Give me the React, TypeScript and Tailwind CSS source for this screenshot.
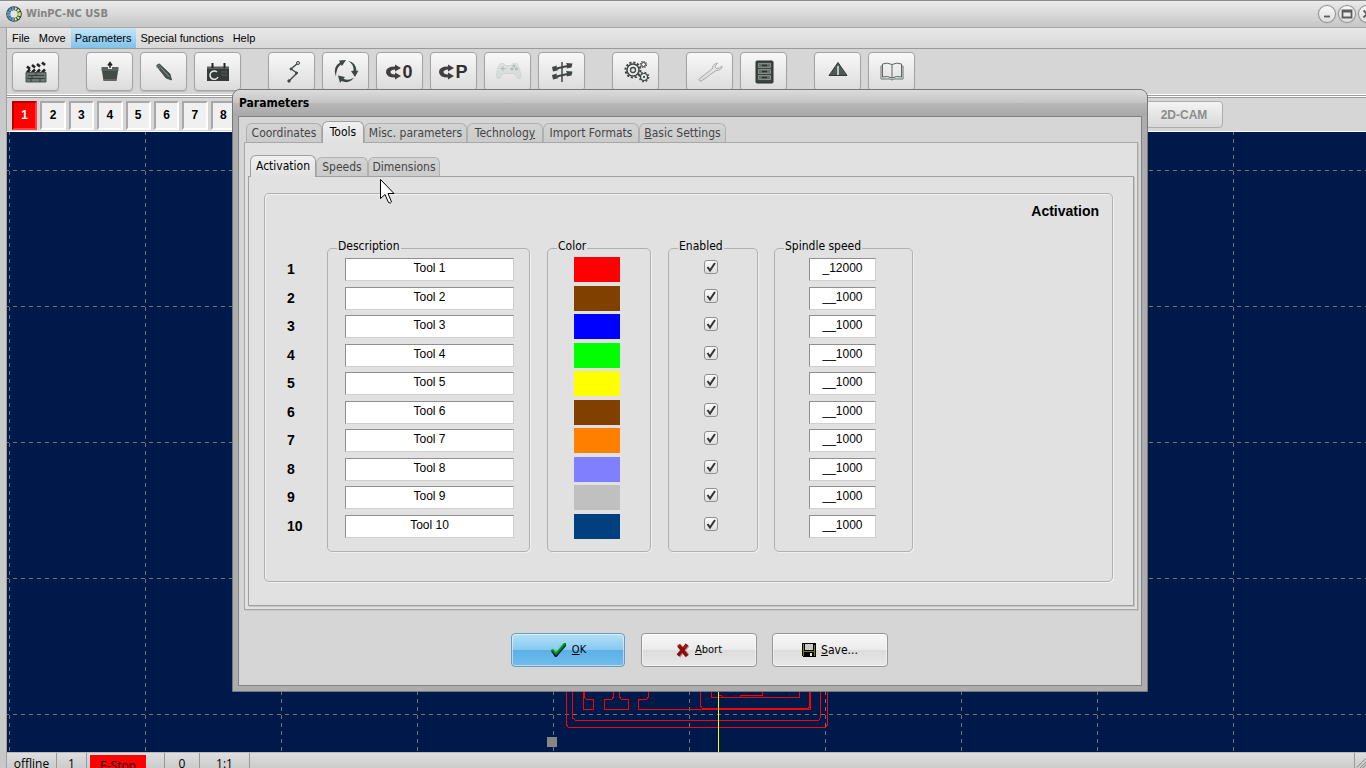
import type { ReactNode } from 'react'
import clsx from 'clsx'

const menuItems = ['File', 'Move', 'Parameters', 'Special functions', 'Help']

const tools = [
  { id: 1, color: '#ff0000', speed: '_12000' },
  { id: 2, color: '#804000', speed: '__1000' },
  { id: 3, color: '#0000ff', speed: '__1000' },
  { id: 4, color: '#00ff00', speed: '__1000' },
  { id: 5, color: '#ffff00', speed: '__1000' },
  { id: 6, color: '#804000', speed: '__1000' },
  { id: 7, color: '#ff8000', speed: '__1000' },
  { id: 8, color: '#8080ff', speed: '__1000' },
  { id: 9, color: '#c0c0c0', speed: '__1000' },
  { id: 10, color: '#004080', speed: '__1000' },
]

const gridColumns = Array.from({ length: 20 }, (_, i) => 2 + i * 136)
const gridRows = Array.from({ length: 12 }, (_, i) => 38 + i * 136)

function Icon({ children, faded }: { children: ReactNode; faded?: boolean }) {
  return (
    <svg
      width="28"
      height="28"
      viewBox="0 0 28 28"
      fill="none"
      stroke="#3f4643"
      className={clsx('shrink-0', faded && 'opacity-40')}
      aria-hidden="true"
    >
      {children}
    </svg>
  )
}

const ClapperIcon = (
  <Icon>
    <path d="M4 8.500 24 3.500v3L4 11.500z" fill="#e8eae9" stroke="none" />
    <path d="m5 8.500 3 2.500M10 7l3 2.500M15 6l3 2.500M20 4.500l3 2.500" stroke="#1f2422" strokeWidth="2.500" />
    <path d="M4 11.500h20v3H4z" fill="#e8eae9" stroke="none" />
    <path d="m5 14.500 3-3M10 14.500l3-3M15 14.500l3-3M20 14.500l3-3" stroke="#1f2422" strokeWidth="2.500" />
    <path d="M4 14.500h20V24H4z" fill="#6d7773" stroke="#4a524e" />
    <path d="M6 17.500h16M5 20.500h18M14 15v2.500M10 17.500v3M18 20.500V24M9 20.500V24" stroke="#363d3a" />
  </Icon>
)

const WorkpieceIcon = (
  <Icon>
    <path d="M5.500 9H12v2h4V9h6.500v4h-17z" fill="#59615e" stroke="none" />
    <path d="M6 13h16l-1.500 10h-13z" fill="#434b47" stroke="none" />
    <path d="M8 22h12" stroke="#7e8783" />
    <path d="M14 10V5M12 7.500 14 4.500l2 3" stroke="#1f2422" strokeWidth="1.500" />
  </Icon>
)

const PencilIcon = (
  <Icon>
    <path d="M6.500 8q1-2 3-2L20 16l1.500 6-5.500-2z" fill="#4b534f" stroke="#2c3330" strokeWidth=".7" />
    <path d="m9.500 7-2.500 2.500M11 8.500 8.500 11M11 10l8 8.500" stroke="#8e9792" />
  </Icon>
)

const CameraIcon = (
  <Icon>
    <path d="M3 8.500h22v3H3z" fill="#5a625e" stroke="none" />
    <path d="M3 11h22v12H3z" fill="#343b38" stroke="none" />
    <path d="M8.500 5v5M20.500 5v5" stroke="#1f2422" strokeWidth="2" />
    <path d="M13 14a4.200 4.200 0 1 0 1 5" stroke="#e4e7e5" strokeWidth="1.500" />
    <path d="M17 14h6M17 17h6" stroke="#59615d" />
  </Icon>
)

const PathIcon = (
  <Icon>
    <path d="M20 5 13 11l6 4-8 8" strokeWidth="1.300" />
    <circle cx="20" cy="5" r="1.500" fill="#ddd" />
    <circle cx="13" cy="11" r="1" fill="#3f4643" />
    <circle cx="18.500" cy="15" r="1" fill="#3f4643" />
    <circle cx="11" cy="23" r="1.200" fill="#3f4643" />
  </Icon>
)

const CycleIcon = (
  <Icon>
    <path d="M4 19Q0 9 8 4.500L7 2.500l7-.5-4 6-1-1.500Q4 10 4 19z" fill="#3f4643" stroke="none" />
    <path d="M16 3q8 1 8.500 10l2-.5-3.500 6.500-4-6 2.500-.2Q22 6 16 3z" fill="#3f4643" stroke="none" />
    <path d="M22 19.500q-5 7-12.500 3.500L8 25l-2-7.500 7 1.500-1.500 1.800q5 2.500 10.500-1.300z" fill="#3f4643" stroke="none" />
  </Icon>
)

// double return arrow in front of the 0 and P symbols
function ReturnIcon({ letter }: { letter: string }) {
  return (
    <span className="flex items-center text-[18px] leading-5 font-bold text-[#332f2f]">
      <svg width="16" height="16" viewBox="0 0 16 16" aria-hidden="true">
        <path d="M9 0.500 15 4 9 7.500V5.500Q4.500 6 4.500 8T9 10.500V8.500l6 3.500-6 3.500v-2Q0 13.500 0 8T9 2.500z" fill="#443f3f" />
      </svg>
      {letter}
    </span>
  )
}

const GamepadIcon = (
  <Icon faded>
    <path
      d="M6 5.500h4l2 2h5l2-2h4q3 4 4 13-.5 2.500-3 2-2-3-4.500-5h-10q-2 2-4 5-2.500.5-3-2Q3 9.500 6 5.500z"
      fill="#c3cec8"
      stroke="#9db3a8"
      strokeWidth=".8"
    />
    <path d="M6.500 10.500h5M9 8v5" stroke="#5e6f66" />
    <circle cx="20" cy="8" r="1" />
    <circle cx="22.500" cy="11" r="1" />
    <circle cx="18" cy="11" r="1" />
  </Icon>
)

const AxesIcon = (
  <Icon>
    <path d="M14 4v20" strokeWidth="1.500" />
    <path d="M6 11 22 7.500M6 19 22 15.500" strokeWidth="2" />
    <path d="m4 9 5-1.500-1 3 3 1.500-6 1.500zM18 5l6.500.5-1 4-5 1 1-2.500zM4 17l5-1.500-1 3 3 1.500-6 1.500zM18 13l6.500.5-1 4-5 1 1-2.500z" fill="#3f4643" stroke="none" />
  </Icon>
)

const GearsIcon = (
  <Icon>
    <circle cx="11" cy="12" r="6" strokeWidth="1.500" />
    <circle cx="11" cy="12" r="7.500" strokeWidth="2" strokeDasharray="2.200 1.730" />
    <circle cx="11" cy="12" r="2.500" strokeWidth="1.300" />
    <circle cx="21.500" cy="6.500" r="2" />
    <circle cx="21.500" cy="6.500" r="3" strokeDasharray="1.300 1" strokeWidth="1.200" />
    <circle cx="22" cy="19" r="3.500" strokeWidth="1.200" />
    <circle cx="22" cy="19" r="4.600" strokeDasharray="1.800 1.800" strokeWidth="1.500" />
    <circle cx="22" cy="19" r=".7" fill="#3f4643" />
  </Icon>
)

const WrenchIcon = (
  <Icon faded>
    <path
      d="m2.500 21.500 14-11q-.5-4 5-5.500L19 8.500l1.500 2 3-.5L26 8q0 4.500-6 4.500L5.500 23q-2 .5-3-1.500z"
      fill="#d2d5d3"
      stroke="#454b48"
    />
  </Icon>
)

const CabinetIcon = (
  <Icon>
    <rect x="6" y="3" width="17" height="22" rx="1" fill="#3c4440" stroke="#2b312e" />
    <path d="M8.500 5.500h12v4h-12zM8.500 11.500h12v4h-12zM8.500 17.500h12v4h-12z" fill="#65706a" stroke="#929a96" strokeWidth=".8" />
    <path d="M12 7.500h5M12 13.500h5M12 19.500h5" stroke="#2b312e" strokeWidth="1.500" />
  </Icon>
)

const WarningIcon = (
  <Icon>
    <path d="m14 4.500 9 13H5z" fill="#505854" stroke="#323936" strokeLinejoin="round" />
    <path d="M14 8v9" stroke="#e4e8e6" strokeWidth="1.500" />
  </Icon>
)

const BookIcon = (
  <Icon>
    <path d="M14 6.500Q9 4 4.500 6v13q5-1.500 9.500 1 4.500-2.500 9.500-1V6Q19 4 14 6.500zM14 6.500V20" stroke="#5d6561" />
    <path d="M4.500 8H3v13h9l2 1 2-1h9V8h-1.500" stroke="#6b736f" />
  </Icon>
)

const toolbarGroups = [
  [{ label: 'Open job', icon: ClapperIcon }],
  [
    { label: 'Workpiece', icon: WorkpieceIcon },
    { label: 'Edit', icon: PencilIcon },
    { label: 'Camera', icon: CameraIcon },
  ],
  [
    { label: 'Start', icon: PathIcon },
    { label: 'Reference', icon: CycleIcon },
    { label: 'Go to zero', icon: <ReturnIcon letter="0" /> },
    { label: 'Go to park', icon: <ReturnIcon letter="P" /> },
    { label: 'Joystick', icon: GamepadIcon },
    { label: 'Jog', icon: AxesIcon },
  ],
  [{ label: 'Machine settings', icon: GearsIcon }],
  [
    { label: 'Tool wizard', icon: WrenchIcon },
    { label: 'Tool magazine', icon: CabinetIcon },
  ],
  [
    { label: 'Warnings', icon: WarningIcon },
    { label: 'Manual', icon: BookIcon },
  ],
]

function TitleBar() {
  return (
    <header className="flex h-7 shrink-0 items-center border-t border-b border-t-[#8c8c8c] border-b-[#a8a8a8] bg-linear-to-b from-[#ececec] to-[#c6c6c6] pl-[6px]">
      <svg width="16" height="16" viewBox="0 0 16 16" className="mr-1" aria-hidden="true">
        <circle cx="8" cy="8" r="7.800" fill="#26425f" />
        <circle cx="8" cy="8" r="5.500" fill="none" stroke="#e6ec52" strokeWidth="2.500" strokeDasharray="1.900 1" />
        <path d="M8 2.500a5.500 5.500 0 0 0 0 11" fill="none" stroke="#4b8df0" strokeWidth="2.500" strokeDasharray="1.900 1" />
        <circle cx="8" cy="8" r="3.800" fill="#e2e6e2" />
      </svg>
      <h1 className="text-[11px] leading-4 font-bold text-[#848484] font-['DejaVu_Sans_Condensed','DejaVu_Sans',sans-serif]">
        WinPC-NC USB
      </h1>
      <div className="-mr-[10px] ml-auto flex gap-[2px]">
        {[
          { label: 'Minimize', d: 'M6 11.500h6' },
          { label: 'Maximize', d: 'M4.500 5.500h9v7h-9zM4.500 6.500h9' },
          { label: 'Close', d: 'm5.500 5.500 7 7M12.500 5.500l-7 7' },
        ].map((control) => (
          <button
            key={control.label}
            aria-label={control.label}
            className="size-[18px] shrink-0 rounded-full bg-linear-to-b from-[#fafafa] to-[#dcdcdc] shadow-[0_0_0_1px_#8f8f8f_inset,0_0_1px_#777]"
          >
            <svg width="18" height="18" viewBox="0 0 18 18" fill="none" stroke="#5c5c5c" strokeWidth="1.800" aria-hidden="true">
              <path d={control.d} />
            </svg>
          </button>
        ))}
      </div>
    </header>
  )
}

function MenuBar() {
  return (
    <nav className="flex h-[21px] shrink-0 gap-px border-b border-[#9a9a9a] bg-linear-to-b from-[#e8e8e8] to-[#d8d8d8] pl-px">
      {menuItems.map((item) => (
        <button
          key={item}
          className={clsx(
            'px-1 text-[11px] leading-5',
            item === 'Parameters' && 'bg-linear-to-b from-[#c4e6f8] to-[#7dc2ea]',
          )}
        >
          {item}
        </button>
      ))}
    </nav>
  )
}

function Toolbar() {
  return (
    <div className="flex shrink-0 gap-[27px] border-b border-white bg-[#d6d6d6] py-[3px] pl-[5px]">
      {toolbarGroups.map((group, index) => (
        <div key={index} className="flex gap-[7px]">
          {group.map((button) => (
            <button
              key={button.label}
              aria-label={button.label}
              className="flex h-[39px] w-[47px] items-center justify-center rounded-[4px] border border-[#a3a3a3] bg-linear-to-b from-[#f8f8f8] to-[#dcdcdc] shadow-[0_1px_1px_#b8b8b8]"
            >
              {button.icon}
            </button>
          ))}
        </div>
      ))}
    </div>
  )
}

function ToolBarRow() {
  return (
    <div className="mt-px flex shrink-0 border-t border-b border-white bg-[#d6d6d6] shadow-[0_1px_0_#9a9a9a_inset,0_-1px_0_#9a9a9a]">
      <div className="grid w-[224px] shrink-0 grid-cols-8 gap-x-[3px] pt-1 pb-px ml-[5px]">
        {tools.slice(0, 8).map((tool) => (
          <button
            key={tool.id}
            className={clsx(
              'h-[29px] border-2 pb-[2px] text-[12px] leading-4 font-bold',
              tool.id === 1
                ? 'border-t-[#b80000] border-r-[#ff4040] border-b-[#ff4040] border-l-[#b80000] bg-[#ff0000] text-white'
                : 'border-t-[#a8a8a8] border-r-white border-b-white border-l-[#a8a8a8] bg-[#f0f0f0]',
            )}
          >
            {tool.id}
          </button>
        ))}
      </div>
      <button
        disabled
        className="mt-1 ml-[909px] h-[27px] w-[78px] shrink-0 rounded-[4px] border border-[#adadad] bg-linear-to-b from-[#f4f4f4] to-[#d8d8d8] text-[12px] leading-4 text-[#8c8c8c] font-bold"
      >
        2D-CAM
      </button>
    </div>
  )
}

function Workspace() {
  return (
    <svg className="min-h-0 w-full flex-1 bg-[#00194b]" shapeRendering="crispEdges" role="img" aria-label="Milling job preview">
      <g stroke="#77736f" strokeDasharray="4 4">
        {gridColumns.map((x) => (
          <path key={x} d={`M${x}.5 0v2000`} strokeDashoffset="1" />
        ))}
        {gridRows.map((y) => (
          <path key={y} d={`M0 ${y}.5h3000`} strokeDashoffset="2" />
        ))}
      </g>
      <g transform="translate(493 488)" fill="none" stroke="#ff0000">
        <path d="M66.500 60v45l2 2.500h257l2-2.500V60" />
        <path d="M72.500 60v38l3 2.500h243l2-3V60" />
        <path d="M83.500 60v29.500h10v-10h-7l-2-2V60" />
        <path d="M113.500 60v17l-2 2.500h-7v10h24v-10h-7l-2-2.500V60" />
        <path d="M148.500 60v17l-2 2.500h-8v10h172V60" />
        <path d="M200.500 60v26l2 2.500h106l1-2V60M211.500 60v17.500h88V60M218.500 75.500h3l1 1.500h18v-1.500h22V60" />
        <path d="M218.500 60v72" stroke="#ffff00" />
        <rect x="47" y="117" width="10" height="10" fill="#858585" stroke="none" />
      </g>
    </svg>
  )
}

function StatusBar() {
  return (
    <footer className="flex h-4 shrink-0 items-start overflow-hidden border-t border-[#b8b8b8] bg-linear-to-b from-[#dedede] to-[#cccccc] text-center text-[12px] leading-[21px] font-['Open_Sans','Noto_Sans',sans-serif]">
      <span className="w-[50px] border-r border-[#999]">offline</span>
      <span className="w-[30px] border-r border-[#999]">1</span>
      <span className="mt-[2px] ml-[3px] w-[56px] bg-[#ff0000]">E-Stop</span>
      <span className="h-6 w-[19px] border-r border-[#999]" />
      <span className="w-[35px] border-r border-[#999]">0</span>
      <span className="w-[50px] border-r border-[#999]">1:1</span>
      <svg width="12" height="16" viewBox="0 0 12 16" stroke="#808080" className="ml-auto border-l border-[#999]" aria-hidden="true">
        <path d="M2 15 12 5M5 16l8-8M8 16l6-6" />
      </svg>
    </footer>
  )
}

function Tab({ active, className, children }: { active?: boolean; className: string; children: ReactNode }) {
  return (
    <button
      role="tab"
      aria-selected={!!active}
      className={clsx(
        'shrink-0 rounded-t-[6px] border border-b-0 text-[12px] leading-4 whitespace-nowrap',
        active
          ? 'relative -mb-px h-[22px] border-[#a0a0a0] bg-linear-to-b from-[#f0f0f0] to-[#e1e1e1] pb-[2px]'
          : 'h-[19px] border-[#b0b0b0] bg-linear-to-b from-[#d4d4d4] to-[#cbcbcb] text-[#454545]',
        className,
      )}
    >
      {children}
    </button>
  )
}

function Group({ title, className, children }: { title: string; className: string; children: ReactNode }) {
  return (
    <fieldset
      className={clsx(
        'shrink-0 rounded-[5px] border border-[#b0b0b0] pb-[9px] shadow-[1px_1px_0_#f0f0f0]',
        className,
      )}
    >
      <legend className="ml-[9px] bg-[#e1e1e1] px-px pb-1 text-[12px] leading-[14px]">{title}</legend>
      <div className="grid h-[285px] grid-rows-10 justify-items-center">{children}</div>
    </fieldset>
  )
}

const fieldClass =
  'h-[23px] border border-t-[#8f8f8f] border-r-[#cfcfcf] border-b-[#cfcfcf] border-l-[#8f8f8f] bg-white pb-[3px] text-center text-[12px] leading-4 font-["Liberation_Sans",Arial,sans-serif]'

function ActivationPage() {
  return (
    <section className="h-[389px] rounded-[5px] border border-[#b0b0b0] pr-[13px] pl-[22px] shadow-[1px_1px_0_#f2f2f2,1px_1px_0_#f2f2f2_inset]">
      <h2 className="pt-[7px] text-right text-[14px] leading-5 font-bold font-['Liberation_Sans',Arial,sans-serif]">
        Activation
      </h2>
      <div className="mt-[18px] flex items-start">
        <div className="mt-4 grid h-[285px] w-10 grid-rows-10 items-center text-[14px] leading-5 font-bold font-['Liberation_Sans',Arial,sans-serif]">
          {tools.map((tool) => (
            <span key={tool.id}>{tool.id}</span>
          ))}
        </div>
        <Group title="Description" className="w-[203px]">
          {tools.map((tool) => (
            <input
              key={tool.id}
              aria-label={`Description ${tool.id}`}
              defaultValue={`Tool ${tool.id}`}
              className={clsx(fieldClass, 'mt-px ml-[2px] w-[169px]')}
            />
          ))}
        </Group>
        <Group title="Color" className="ml-[17px] w-[104px]">
          {tools.map((tool) => (
            <button
              key={tool.id}
              aria-label={`Color ${tool.id}`}
              className="mr-1 h-[25px] w-[46px]"
              style={{ backgroundColor: tool.color }}
            />
          ))}
        </Group>
        <Group title="Enabled" className="ml-[17px] w-[90px]">
          {tools.map((tool) => (
            <label key={tool.id} className="relative mt-[3px] mr-1 size-[14px]">
              <input
                type="checkbox"
                defaultChecked
                aria-label={`Enabled ${tool.id}`}
                className="peer block size-[14px] appearance-none rounded-[3px] border border-[#8f8f8f] bg-linear-to-b from-[#fbfbfb] to-[#dedede]"
              />
              <svg
                viewBox="0 0 14 14"
                className="pointer-events-none absolute inset-0 hidden peer-checked:block"
                fill="none"
                stroke="#333"
                strokeWidth="2"
                aria-hidden="true"
              >
                <path d="m3.500 7 2.500 3.500L11 3" />
              </svg>
            </label>
          ))}
        </Group>
        <Group title="Spindle speed" className="ml-4 w-[139px]">
          {tools.map((tool) => (
            <input
              key={tool.id}
              aria-label={`Spindle speed ${tool.id}`}
              defaultValue={tool.speed}
              className={clsx(fieldClass, 'mt-px mr-[2px] w-[67px]')}
            />
          ))}
        </Group>
      </div>
    </section>
  )
}

const dialogButton =
  'flex h-[34px] items-center justify-center gap-[5px] rounded-[4px] border leading-4 shadow-[0_0_0_1px_#ffffff80_inset]'
const plainButton =
  'w-[116px] border-[#979797] bg-[linear-gradient(#f8f8f8,#ebebeb_50%,#dcdcdc_50%,#e8e8e8)]'

function ParametersDialog() {
  return (
    <div
      role="dialog"
      aria-label="Parameters"
      className="absolute top-[89px] left-[232px] w-[916px] rounded-t-[8px] border border-[#777] bg-[#adadad] px-[5px] pb-[5px] font-['DejaVu_Sans_Condensed','DejaVu_Sans',sans-serif]"
    >
      <div className="-mx-[5px] flex h-[26px] items-center rounded-t-[7px] bg-[linear-gradient(#dcdcdc,#c4c4c4_50%,#b8b8b8_50%,#a8a8a8)] pl-[6px] text-[12px] leading-4 font-bold">
        Parameters
      </div>
      <div className="border border-[#838383] bg-[#d6d6d6] pr-[3px] pb-[18px] pl-[5px]">
        <div role="tablist" className="flex items-end pt-1 pl-[2px]">
          <Tab className="w-[76px]">Coordinates</Tab>
          <Tab active className="w-[42px]">Tools</Tab>
          <Tab className="w-[103px]">Misc. parameters</Tab>
          <Tab className="w-[76px]">Technolog<u>y</u></Tab>
          <Tab className="w-[96px]">Import Formats</Tab>
          <Tab className="w-[87px]"><u>B</u>asic Settings</Tab>
        </div>
        <div className="border border-[#a8a8a8] bg-[#e1e1e1] px-[3px] pt-3 pb-[3px] shadow-[1px_1px_0_#c4c4c4]">
          <div role="tablist" className="flex items-end pl-[2px]">
            <Tab active className="w-[66px]">Activation</Tab>
            <Tab className="w-[52px]">Speeds</Tab>
            <Tab className="w-[72px]">Dimensions</Tab>
          </div>
          <div className="border border-[#a0a0a0] pt-4 pr-5 pb-[23px] pl-[15px] shadow-[1px_1px_0_#c4c4c4]">
            <ActivationPage />
          </div>
        </div>
        <div className="mt-[23px] flex pl-[267px]">
          <button
            className={clsx(
              dialogButton,
              'w-[114px] border-[#6b9dbd] bg-[linear-gradient(#b4e0f8,#86c8f0_50%,#5cb0e6_50%,#70bcec)] text-[11px]',
            )}
          >
            <svg width="17" height="16" viewBox="0 0 17 16" aria-hidden="true">
              <path d="m1 9 2-1.500L6 11l8.500-9.500L16 2v2L6.500 15H5z" fill="#00104a" />
              <path d="m1 8 2-1 3 3.500L14 1h2v1.500L6 13.500z" fill="#078a12" />
              <path d="m1 8 2-1 3 3.500L14 1" fill="none" stroke="#1ec82c" />
            </svg>
            <span><u>O</u>K</span>
          </button>
          <button className={clsx(dialogButton, plainButton, 'ml-4 text-[11px]')}>
            <svg width="14" height="15" viewBox="0 0 14 15" fill="none" aria-hidden="true">
              <path d="M3 2.500 11.500 13M11.500 2 2.500 13" stroke="#9b9b9b" strokeWidth="4.500" />
              <path d="m2.500 2 8.500 11M11 1.500 2 12.500" stroke="#930808" strokeWidth="3.500" />
              <path d="m2 1.500 2 2M10.500 1.500 8 5" stroke="#e02020" />
            </svg>
            <span><u>A</u>bort</span>
          </button>
          <button className={clsx(dialogButton, plainButton, 'ml-[15px] text-[12px]')}>
            <svg width="14" height="14" viewBox="0 0 14 14" shapeRendering="crispEdges" aria-hidden="true">
              <path d="M0 0h14v14H1l-1-1z" fill="#000" />
              <path d="M1 1h1v12H1zM12 2h1v11h-1zM2 8h10v1H2z" fill="#808000" />
              <path d="M3 1h8v6H3z" fill="#c8c8c8" />
              <path d="M8 10h2v3H8z" fill="#e6e6e6" />
            </svg>
            <span><u>S</u>ave...</span>
          </button>
        </div>
      </div>
      <svg width="16" height="26" viewBox="0 0 16 26" className="absolute top-[89px] left-[147px]" aria-hidden="true">
        <path d="M.5.500v19l4.500-4 3.500 8q2 1.500 3-.5L8 14.500h6z" fill="#fff" stroke="#000" />
      </svg>
    </div>
  )
}

export default function App() {
  return (
    <div className="relative flex h-screen overflow-hidden bg-[#c9c9c9] font-['Liberation_Sans',Arial,sans-serif] text-black">
      <div className="flex min-w-0 flex-1 flex-col">
        <TitleBar />
        <main className="flex min-h-0 flex-1 flex-col border-l border-[#a0a0a0] ml-[6px]">
          <MenuBar />
          <Toolbar />
          <ToolBarRow />
          <Workspace />
          <StatusBar />
        </main>
      </div>
      <ParametersDialog />
    </div>
  )
}
